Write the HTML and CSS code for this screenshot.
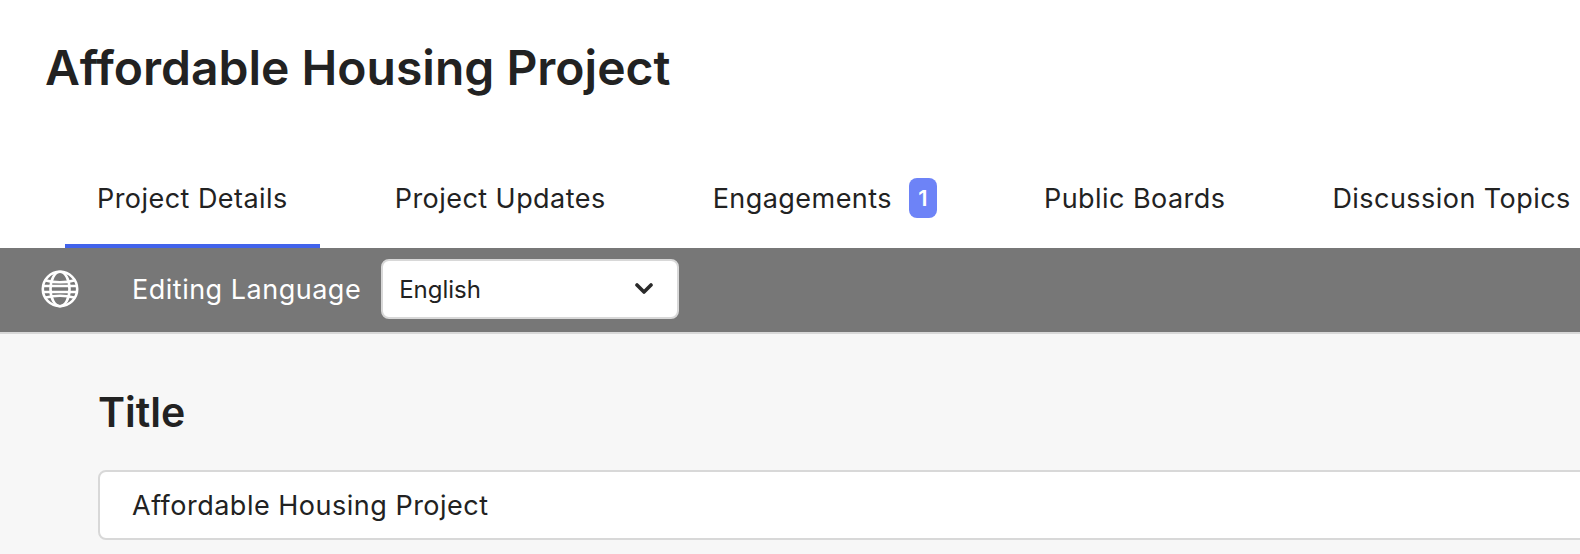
FILE: index.html
```html
<!DOCTYPE html>
<html lang="en">
<head>
<meta charset="utf-8">
<title>Affordable Housing Project</title>
<link rel="stylesheet" href="styles.css">
</head>
<body>
<header class="page-head">
  <h1 class="page-title">Affordable Housing Project</h1>
</header>
<nav class="tabs">
  <a class="tab tab-active">Project Details</a>
  <a class="tab">Project Updates</a>
  <a class="tab">Engagements<span class="badge">1</span></a>
  <a class="tab">Public Boards</a>
  <a class="tab">Discussion Topics</a>
</nav>
<div class="lang-bar">
  <svg class="globe" viewBox="0 0 38 38" fill="none" stroke="#fff" stroke-width="2.6">
    <circle cx="19" cy="19" r="17.2"/>
    <ellipse cx="19" cy="19" rx="9.5" ry="17.2"/>
    <path d="M5 10.5c8 2.4 20 2.4 28 0M2 16h34M2 22h34M5 27.5c8-2.4 20-2.4 28 0"/>
  </svg>
  <span class="lang-label">Editing Language</span>
  <div class="select">
    <span>English</span>
    <svg class="chev" viewBox="0 0 18 12" fill="none" stroke="#2a2a2a" stroke-width="3.6" stroke-linecap="round" stroke-linejoin="round">
      <path d="M2 2l7 7 7-7"/>
    </svg>
  </div>
</div>
<main class="content">
  <h2 class="field-title">Title</h2>
  <div class="input">Affordable Housing Project</div>
</main>
</body>
</html>
```
FILE: styles.css
```css
* { box-sizing: border-box; }
html, body { margin: 0; height: 100%; overflow: hidden; }
body { width: 1580px; height: 554px; background: #fff; color: #222; font-family: Inter, "Liberation Sans", sans-serif; }
.page-head { height: 164px; padding: 36px 0 0 45px; }
.page-title { margin: 0; font-size: 48px; line-height: 64px; font-weight: 600; letter-spacing: 0; }
.tabs { display: flex; height: 84px; padding-left: 65px; gap: 43px; white-space: nowrap; }
.tab { display: flex; align-items: center; height: 84px; padding: 0 32px 12px; font-size: 27px; font-weight: 400; letter-spacing: 0.45px; border-bottom: 4px solid transparent; }
.tab-active { border-bottom-color: #4263eb; }
.badge { display: flex; align-items: center; justify-content: center; width: 28px; height: 40px; margin-left: 17px; border-radius: 8px; background: #6d83f7; color: #fff; font-size: 22px; font-weight: 600; letter-spacing: 0; }
.lang-bar { display: flex; align-items: center; height: 86px; padding: 0 0 2px 41px; background: #777; border-bottom: 2px solid #d8d8d8; }
.globe { width: 38px; height: 38px; flex: none; }
.lang-label { margin-left: 53px; color: #fff; font-size: 27px; letter-spacing: 0.5px; }
.select { display: flex; align-items: center; justify-content: space-between; width: 298px; height: 60px; margin-left: 20px; padding: 0 24px 0 16px; background: #fff; border: 2px solid #d8d8d8; border-radius: 8px; font-size: 24px; }
.chev { width: 18px; height: 12px; }
.content { height: 220px; padding: 50px 0 0 98px; background: #f7f7f7; }
.field-title { margin: 0 0 30px; font-size: 41px; line-height: 56px; font-weight: 600; }
.input { width: 1600px; height: 70px; padding: 0 32px; display: flex; align-items: center; background: #fff; border: 2px solid #d8d8d8; border-radius: 8px; font-size: 27px; letter-spacing: 0.5px; }
```
